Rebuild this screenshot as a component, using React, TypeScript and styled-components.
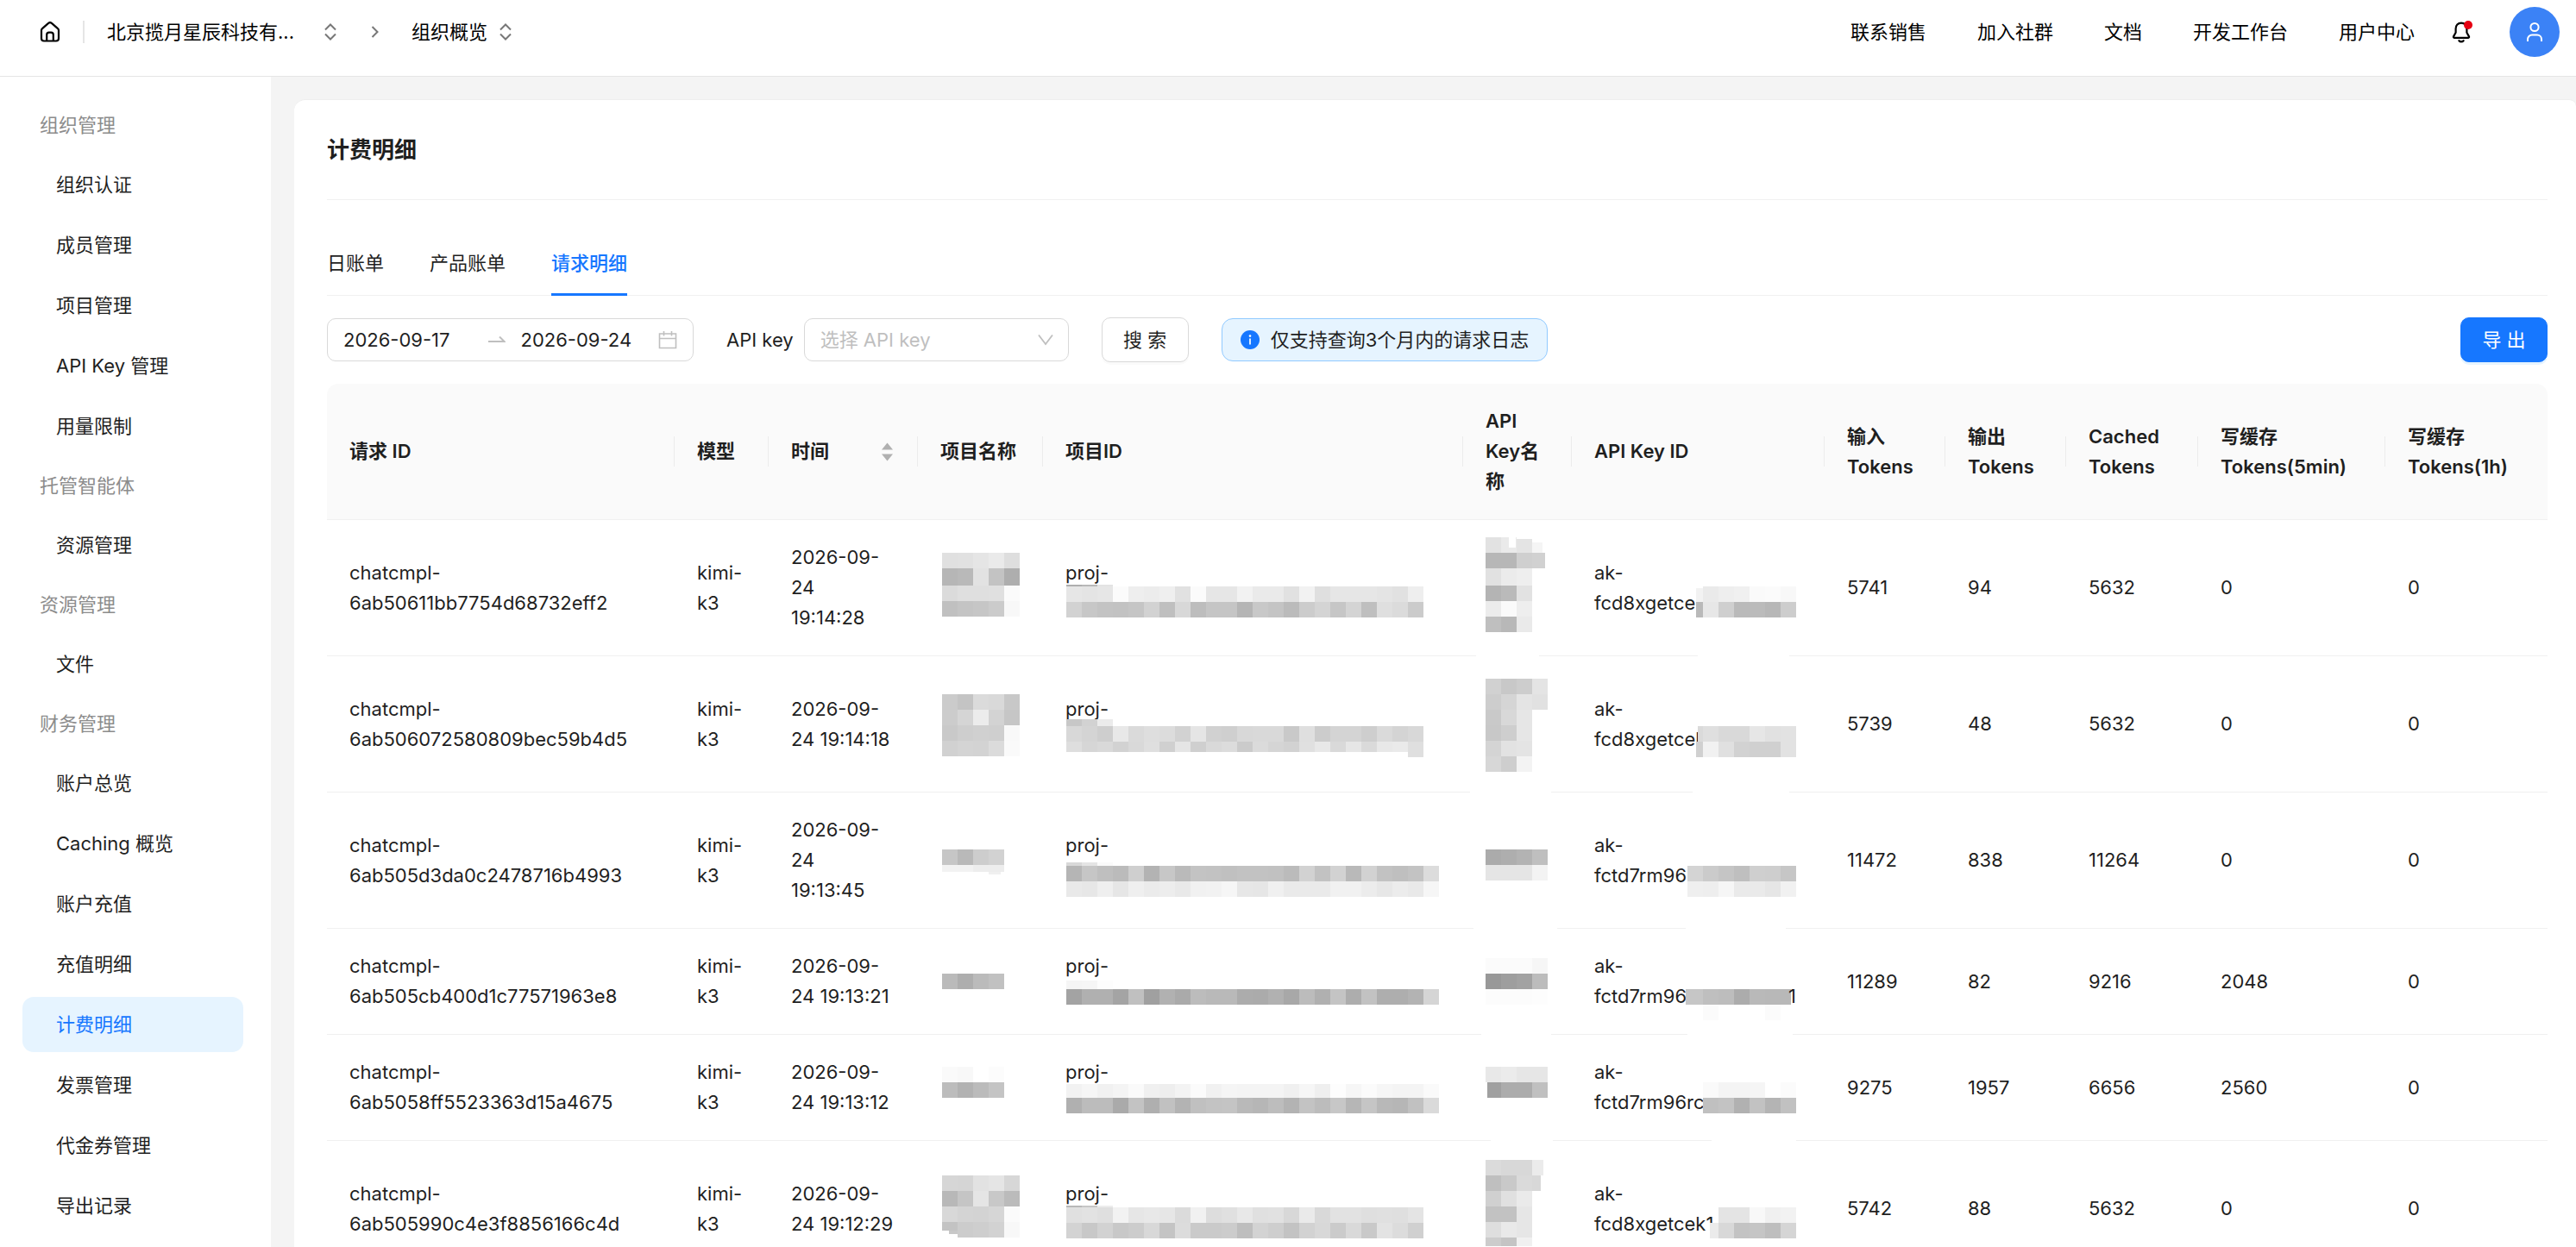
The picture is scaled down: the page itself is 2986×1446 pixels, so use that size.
import React from "react";
import styled, { createGlobalStyle, css } from "styled-components";

const GlobalStyle = createGlobalStyle`
  * { box-sizing: border-box; }
  body {
    margin: 0;
    color: #1f1f1f;
    background: #f4f4f4;
    font-family: Inter, "Noto Sans CJK SC", sans-serif;
    font-size: 22px;
    line-height: 35px;
  }
  button, input, select { font: inherit; color: inherit; }
`;

/* ---------- shell ---------- */

const Shell = styled.div`
  display: flex;
  flex-direction: column;
  height: 100vh;
  overflow: hidden;
`;

const Header = styled.header`
  display: flex;
  align-items: center;
  justify-content: space-between;
  flex: none;
  height: 89px;
  padding: 0 19px 14px 46px;
  background: #fff;
  border-bottom: 1px solid #e5e5e5;
  color: #000;
`;

const Crumbs = styled.nav`
  display: flex;
  align-items: center;
`;

const PlainButton = styled.button`
  display: inline-flex;
  align-items: center;
  padding: 0;
  border: 0;
  background: none;
  cursor: pointer;
`;

const CrumbDivider = styled.span`
  width: 2px;
  height: 26px;
  margin: 0 26px;
  background: #e5e5e5;
`;

const OrgButton = styled(PlainButton)`
  gap: 35px;
`;

const PageButton = styled(PlainButton)`
  gap: 14px;
`;

const CrumbArrow = styled.svg`
  margin: 0 38px 0 40px;
`;

const TopNav = styled.nav`
  display: flex;
  align-items: center;
  gap: 59px;
`;

const TopLink = styled.a`
  color: #000;
  text-decoration: none;
`;

const TopActions = styled.div`
  display: flex;
  align-items: center;
  gap: 43px;
`;

const BellButton = styled(PlainButton)`
  position: relative;
`;

const BellDot = styled.span`
  position: absolute;
  top: 0;
  right: 0;
  width: 10px;
  height: 10px;
  border-radius: 50%;
  background: #e60012;
`;

const Avatar = styled(PlainButton)`
  justify-content: center;
  width: 58px;
  height: 58px;
  border-radius: 50%;
  background: #3b82f6;
`;

const Body = styled.div`
  display: flex;
  flex: 1;
  min-height: 0;
`;

const Sidebar = styled.nav`
  display: flex;
  flex-direction: column;
  gap: 6px;
  flex: none;
  width: 314px;
  padding: 25px 32px 0 26px;
  background: #fff;
`;

const GroupLabel = styled.div`
  flex: none;
  padding: 14px 20px 13px;
  color: #8c8c8c;
`;

const MenuLink = styled.a<{ $active?: boolean }>`
  display: flex;
  align-items: center;
  flex: none;
  height: 64px;
  padding: 0 39px;
  border-radius: 13px;
  color: ${(p) => (p.$active ? "#1677ff" : "#1f1f1f")};
  background: ${(p) => (p.$active ? "#e6f4ff" : "transparent")};
  text-decoration: none;
  white-space: nowrap;
`;

const Main = styled.main`
  flex: 1;
  min-width: 0;
  padding: 26px 0 0 27px;
`;

const Card = styled.section`
  min-height: 100%;
  padding: 0 33px 0 38px;
  background: #fff;
  border-top: 1px solid #eee;
  border-radius: 13px 8px 0 0;
`;

const Title = styled.h1`
  margin: 0;
  padding: 38px 0 37px;
  border-bottom: 1px solid #f0f0f0;
  font-size: 26px;
  line-height: 40px;
  font-weight: 600;
`;

/* ---------- tabs and filters ---------- */

const Tabs = styled.div`
  display: flex;
  gap: 53px;
  margin-top: 37px;
  border-bottom: 1px solid #f0f0f0;
`;

const Tab = styled.button<{ $active?: boolean }>`
  margin: 0 0 -1px;
  padding: 19px 0 20px;
  border: 0;
  background: none;
  cursor: pointer;
  ${(p) =>
    p.$active &&
    css`
      color: #1677ff;
      font-weight: 500;
      box-shadow: inset 0 -3px #1677ff;
    `}
`;

const Filters = styled.form`
  display: flex;
  align-items: center;
  gap: 38px;
  height: 52px;
  margin: 25px 0;
`;

const DateRange = styled.div`
  display: flex;
  align-items: center;
  width: 425px;
  height: 50px;
  padding: 0 18px;
  border: 1px solid #d9d9d9;
  border-radius: 10px;
`;

const DateInput = styled.input`
  flex: 1;
  min-width: 0;
  padding: 0;
  border: 0;
  outline: 0;
  background: none;
`;

const DateArrow = styled.svg`
  flex: none;
  margin: 0 18px 0 8px;
`;

const Field = styled.div`
  display: flex;
  align-items: center;
  gap: 12px;
`;

const SelectBox = styled.div`
  position: relative;
  display: flex;
`;

const KeySelect = styled.select`
  width: 307px;
  height: 50px;
  padding: 0 48px 0 18px;
  border: 1px solid #d9d9d9;
  border-radius: 10px;
  outline: 0;
  appearance: none;
  background: #fff;
  color: #bfbfbf;
`;

const SelectArrow = styled.svg`
  position: absolute;
  right: 18px;
  top: 18px;
  pointer-events: none;
`;

const Button = styled.button<{ $primary?: boolean }>`
  width: 101px;
  height: 52px;
  padding: 0;
  border: 1px solid ${(p) => (p.$primary ? "#1677ff" : "#d9d9d9")};
  border-radius: 10px;
  background: ${(p) => (p.$primary ? "#1677ff" : "#fff")};
  color: ${(p) => (p.$primary ? "#fff" : "#1f1f1f")};
  box-shadow: 0 3px 0 ${(p) => (p.$primary ? "rgba(5, 145, 255, 0.1)" : "rgba(0, 0, 0, 0.02)")};
  cursor: pointer;
`;

const Notice = styled.div`
  display: flex;
  align-items: center;
  gap: 13px;
  height: 50px;
  padding: 0 21px;
  border: 1px solid #91caff;
  border-radius: 13px;
  background: #e6f4ff;
`;

const Spacer = styled.div`
  flex: 1;
`;

/* ---------- table ---------- */

const Table = styled.table`
  width: 100%;
  table-layout: fixed;
  border-collapse: separate;
  border-spacing: 0;
`;

const Th = styled.th`
  position: relative;
  height: 158px;
  padding: 26px;
  background: #fafafa;
  border-bottom: 1px solid #f0f0f0;
  font-weight: 600;
  text-align: left;
  white-space: nowrap;
  &:first-child { border-top-left-radius: 13px; }
  &:last-child { border-top-right-radius: 13px; }
  &:not(:last-child)::after {
    content: "";
    position: absolute;
    right: 0;
    top: 61px;
    width: 1px;
    height: 35px;
    background: #ececec;
  }
`;

const Sortable = styled.div`
  display: flex;
  align-items: center;
  justify-content: space-between;
`;

const Td = styled.td`
  padding: 26px;
  border-bottom: 1px solid #f0f0f0;
  vertical-align: middle;
  white-space: nowrap;
`;

const Masked = styled.div<{ $lines: number }>`
  position: relative;
  min-height: ${(p) => p.$lines * 35}px;
`;

const MaskLayer = styled.svg`
  position: absolute;
  inset: 0;
  width: 100%;
  height: 100%;
  overflow: visible;
`;

const KeyTail = styled.span`
  position: absolute;
  right: 7px;
  bottom: 0;
`;

/** A run of mosaic tiles: x, y, height, grey levels, tile width. */
type Strip = [number, number, number, string, number?];

const Mosaic = ({ strips }: { strips: Strip[] }) => (
  <MaskLayer aria-hidden="true" shapeRendering="crispEdges">
    {strips.map(([x, y, h, shades, w = 18], s) =>
      shades.split(" ").map((g, i) => (
        <rect key={`${s}-${i}`} x={x + i * w} y={y} width={w} height={h} fill={`#${g}${g}${g}`} />
      ))
    )}
  </MaskLayer>
);

const Lines = ({ lines }: { lines: string[] }) => (
  <>
    {lines.map((line, i) => (
      <React.Fragment key={i}>
        {i > 0 && <br />}
        {line}
      </React.Fragment>
    ))}
  </>
);

type Row = {
  id: string;
  time: string[];
  lines: number;
  project: Strip[];
  projectId: Strip[];
  keyName: Strip[];
  key: string;
  keyTail?: string;
  keyMask: Strip[];
  tokens: number[];
};

const rows: Row[] = [
  {
    id: "6ab50611bb7754d68732eff2",
    time: ["2026-09-", "24", "19:14:28"],
    lines: 3,
    project: [
      [2, 12, 18, "e0 e1 e5 ea de"],
      [2, 30, 20, "b6 b9 e2 c3 ae"],
      [2, 50, 18, "db df df e0 fb"],
      [2, 68, 18, "c0 c4 c6 cb f8"],
    ],
    projectId: [
      [1, 31, 2, "ae b8 e3"],
      [1, 33, 18, "e6 e4 e6 fb ee ec ef e1 fb e6 e6 f2 ea ea e1 f2 df e6 e6 e6 e4 e1 ee"],
      [1, 51, 18, "d2 c7 c3 c2 c5 d2 bf d8 bd c5 c5 b5 c8 c4 bb cc d4 c6 d4 bf df db cb"],
    ],
    keyName: [
      [0, -6, 18, "e2 ea"],
      [27, -6, 12, "ff", 8],
      [36, -4, 16, "e4"],
      [54, 0, 12, "f5", 12],
      [0, 12, 18, "b7 b7 cf"],
      [54, 12, 18, "d1", 15],
      [0, 30, 20, "e1 eb ee"],
      [0, 50, 18, "b4 ba e2"],
      [0, 68, 18, "ec fa ee"],
      [0, 86, 18, "bf b8 ea"],
      [-11, 130, 3, "ff", 73],
    ],
    key: "fcd8xgetce",
    keyMask: [
      [118, 35, 16, "f2", 8],
      [126, 33, 18, "ea ee f0 fa fb f8"],
      [118, 51, 18, "b9", 8],
      [126, 51, 18, "e7 cf ba bb b7 cd"],
      [120, 112, 4, "ff", 106],
    ],
    tokens: [5741, 94, 5632, 0, 0],
  },
  {
    id: "6ab506072580809bec59b4d5",
    time: ["2026-09-", "24 19:14:18"],
    lines: 3,
    project: [
      [2, 18, 18, "cb c4 db d9 c8"],
      [2, 36, 18, "cc d5 ec d3 c6"],
      [2, 54, 18, "c9 ce d0 cf f9"],
      [2, 72, 18, "d1 d4 d3 db fa"],
    ],
    projectId: [
      [1, 29, 8, "c7 d2 eb"],
      [1, 37, 18, "d8 d4 ce e8 da de dc d2 e5 d1 cf d8 d9 d9 c9 df cc d4 d4 ce da d4 d8"],
      [1, 55, 12, "de d6 d9 d2 d9 df d0 e5 cf d9 dc cb db d5 d2 e0 e8 d9 e6 da e8 ea"],
      [397, 55, 18, "df"],
    ],
    keyName: [
      [0, 0, 18, "d1 c8 cd e4"],
      [0, 18, 18, "cd d5 e4 e1"],
      [0, 36, 18, "c9 d8 e6"],
      [0, 54, 18, "c8 ce e6"],
      [0, 72, 18, "d4 e2 e4"],
      [0, 90, 18, "d7 ce f3"],
      [-18, 130, 3, "ff", 94],
    ],
    key: "fcd8xgetcel",
    keyMask: [
      [120, 37, 18, "da", 6],
      [126, 37, 18, "df d9 d9 e6 e1 e2"],
      [118, 55, 18, "d0", 8],
      [126, 55, 18, "f1 e0 d2 d0 d0 e2"],
      [114, 112, 4, "ff", 112],
    ],
    tokens: [5739, 48, 5632, 0, 0],
  },
  {
    id: "6ab505d3da0c2478716b4993",
    time: ["2026-09-", "24", "19:13:45"],
    lines: 3,
    project: [
      [2, 40, 18, "c6 b9 cd d2"],
      [2, 58, 8, "f2 f2 ed ed"],
      [56, 66, 3, "f0", 14],
    ],
    projectId: [
      [1, 37, 4, "d8 e4 fa"],
      [1, 41, 18, "b5 c6 bf bb cf b3 c7 ba c3 c2 c0 c2 c2 c1 bb d2 c2 d2 b9 d2 c2 bf c3 dc"],
      [1, 59, 18, "e9 e7 ef e6 ef eb ed e9 f1 f2 f6 e7 e6 f0 ea ea ea f1 f1 ec e7 ec e9 f6"],
    ],
    keyName: [
      [0, 40, 18, "ab ae b3 bf"],
      [0, 58, 18, "e5 e5 e5 f3"],
      [-14, 130, 3, "ff", 97],
    ],
    key: "fctd7rm96",
    keyMask: [
      [108, 41, 18, "d4 cb c5 bf cf ce c6"],
      [108, 59, 18, "ef ee f6 ea ea e6 f1"],
      [106, 112, 4, "ff", 116],
    ],
    tokens: [11472, 838, 11264, 0, 0],
  },
  {
    id: "6ab505cb400d1c77571963e8",
    time: ["2026-09-", "24 19:13:21"],
    lines: 2,
    project: [[2, 26, 18, "ba ae bb c1"]],
    projectId: [
      [1, 34, 10, "f5 f6 fd"],
      [1, 44, 18, "a3 b0 b0 a4 c0 a0 b1 aa bc b9 b9 ac ab b1 a8 bc b0 c4 ad c2 ae ae b3 d5"],
    ],
    keyName: [
      [0, 8, 18, "fb fb fb f6"],
      [0, 26, 18, "98 9e a2 bc"],
      [0, 44, 18, "fc fc fc fd"],
      [-5, 95, 3, "ff", 81],
    ],
    key: "fctd7rm96",
    keyTail: "1",
    keyMask: [
      [106, 44, 18, "c6", 20],
      [126, 44, 18, "bf bd ac b9 b8"],
      [216, 44, 18, "b8", 12],
      [126, 62, 18, "fb ff ff ff fb"],
      [108, 95, 3, "ff", 122],
    ],
    tokens: [11289, 82, 9216, 2048, 0],
  },
  {
    id: "6ab5058ff5523363d15a4675",
    time: ["2026-09-", "24 19:13:12"],
    lines: 2,
    project: [
      [2, 11, 18, "fa f8 ff fc"],
      [2, 29, 18, "bc b2 bb c4"],
    ],
    projectId: [
      [1, 31, 16, "f2 f6 f1 f4 fa f0 ee f3 fb f1 f5 f4 f4 f4 f0 f6 ef fd f6 fb f6 f4 f4 fa"],
      [1, 47, 18, "b0 bc bc aa c3 af c1 b3 c0 c3 c4 b9 b6 bd b3 c3 bc c7 b6 c5 b8 b6 c1 da"],
    ],
    keyName: [
      [0, 11, 18, "e8 eb e6 e6"],
      [2, 29, 18, "a0", 16],
      [18, 29, 18, "ac ac c0"],
      [6, 95, 3, "ff", 72],
    ],
    key: "fctd7rm96rc",
    keyMask: [
      [126, 29, 18, "fa f4 f4 f5 ff fb"],
      [126, 47, 18, "c0 c3 b1 c2 b4 c1"],
      [136, 95, 3, "ff", 98],
    ],
    tokens: [9275, 1957, 6656, 2560, 0],
  },
  {
    id: "6ab505990c4e3f8856166c4d",
    time: ["2026-09-", "24 19:12:29"],
    lines: 3,
    project: [
      [2, 14, 18, "d6 d5 e2 e5 d7"],
      [2, 32, 18, "b8 c5 e5 c8 bb"],
      [2, 50, 18, "d8 d4 d3 d6 fb"],
      [2, 68, 10, "c3"],
      [10, 78, 4, "c8", 10],
      [20, 68, 18, "cc ce d2 f8"],
    ],
    projectId: [
      [1, 31, 2, "b8 c6 ec"],
      [1, 33, 18, "e0 e2 df f2 e6 e8 e6 db f1 dd e0 e8 e0 e1 d8 ea d9 e2 e2 df e0 df e4"],
      [1, 51, 18, "d3 c8 d2 c8 cc d8 c4 dc ca ca cc be d3 ce c3 d2 d8 cb d9 c9 e3 dc d0"],
    ],
    keyName: [
      [0, -4, 18, "db d8 d8"],
      [54, -4, 18, "eb", 13],
      [0, 14, 18, "bf c9 da"],
      [54, 14, 18, "d8", 10],
      [0, 32, 18, "d0 e0 ea"],
      [0, 50, 18, "c2 c2 e6"],
      [0, 68, 18, "de e9 e6"],
      [0, 86, 10, "cc c4 f0"],
    ],
    key: "fcd8xgetcek1",
    keyMask: [
      [144, 33, 18, "e4 e4 f8 f0 f2"],
      [134, 51, 18, "eb", 10],
      [144, 51, 18, "d8 c3 c5 be d5"],
    ],
    tokens: [5742, 88, 5632, 0, 0],
  },
];

const columnWidths = [403, 109, 173, 145, 487, 126, 293, 140, 140, 153, 217, 188];

const menu = [
  { label: "组织管理", items: ["组织认证", "成员管理", "项目管理", "API Key 管理", "用量限制"] },
  { label: "托管智能体", items: ["资源管理"] },
  { label: "资源管理", items: ["文件"] },
  {
    label: "财务管理",
    items: ["账户总览", "Caching 概览", "账户充值", "充值明细", "计费明细", "发票管理", "代金券管理", "导出记录"],
  },
];

/* ---------- icons ---------- */

const UpDown = () => (
  <svg width="14" height="20" viewBox="0 0 14 20" fill="none" stroke="#777" strokeWidth="2">
    <path d="M1 7.5 7 1.5l6 6M1 12.5l6 6 6-6" />
  </svg>
);

const HomeIcon = () => (
  <svg width="24" height="24" viewBox="0 0 24 24" fill="none" stroke="#000" strokeWidth="2.2">
    <path d="M2 10.3c0-.9.4-1.7 1-2.2l7.1-6.2a2.8 2.8 0 0 1 3.8 0L21 8.1c.6.5 1 1.3 1 2.2v9.2a3 3 0 0 1-3 3H5a3 3 0 0 1-3-3z" />
    <path d="M8.2 22.5v-7.3a2.6 2.6 0 0 1 2.6-2.6h2.4a2.6 2.6 0 0 1 2.6 2.6v7.3" />
  </svg>
);

const BellIcon = () => (
  <svg width="24" height="26" viewBox="0 0 24 26" fill="none" stroke="#000" strokeWidth="2.2" strokeLinejoin="round">
    <path d="M11 2.6c-4 0-6.4 2.8-6.4 6.6v4.6L2 18.4c-.3.7 0 1.4.8 1.4h16.4c.8 0 1.1-.7.8-1.4l-2.6-4.6V9.2c0-3.8-2.4-6.6-6.4-6.6z" />
    <path d="M8.4 23.2c1.4 1.6 3.8 1.6 5.2 0" strokeLinecap="round" />
  </svg>
);

const UserIcon = () => (
  <svg width="20" height="24" viewBox="0 0 20 24" fill="none" stroke="#fff" strokeWidth="2">
    <circle cx="10" cy="6.5" r="4.6" />
    <path d="M2 23v-2.5a5 5 0 0 1 5-5h6a5 5 0 0 1 5 5V23" />
  </svg>
);

const CalendarIcon = () => (
  <svg width="22" height="22" viewBox="0 0 22 22" fill="none" stroke="#bfbfbf" strokeWidth="1.6">
    <path d="M1.5 4h19v16.5h-19zM1.5 9.5h19M6.5 1v5.5M15.5 1v5.5" />
  </svg>
);

const InfoIcon = () => (
  <svg width="22" height="22" viewBox="0 0 22 22">
    <circle cx="11" cy="11" r="11" fill="#1677ff" />
    <circle cx="11" cy="6.6" r="1.3" fill="#fff" />
    <path d="M11 9.6v6.8" stroke="#fff" strokeWidth="1.7" />
  </svg>
);

const SortIcon = () => (
  <svg width="19" height="22" viewBox="0 0 19 22" fill="#b0b0b0">
    <path d="M3 8.5 9.5.5l6.5 8zM3 13.5h13l-6.5 8z" />
  </svg>
);

/* ---------- page ---------- */

export default function App() {
  return (
    <Shell>
      <GlobalStyle />
      <Header>
        <Crumbs aria-label="路径">
          <PlainButton aria-label="首页">
            <HomeIcon />
          </PlainButton>
          <CrumbDivider />
          <OrgButton>
            北京揽月星辰科技有...
            <UpDown />
          </OrgButton>
          <CrumbArrow width="9" height="14" viewBox="0 0 9 14" fill="none" stroke="#777" strokeWidth="2">
            <path d="m1.5 1 6 6-6 6" />
          </CrumbArrow>
          <PageButton>
            组织概览
            <UpDown />
          </PageButton>
        </Crumbs>
        <TopActions>
          <TopNav>
            {["联系销售", "加入社群", "文档", "开发工作台", "用户中心"].map((t) => (
              <TopLink key={t} href="#">
                {t}
              </TopLink>
            ))}
          </TopNav>
          <BellButton aria-label="通知">
            <BellIcon />
            <BellDot />
          </BellButton>
          <Avatar aria-label="账户">
            <UserIcon />
          </Avatar>
        </TopActions>
      </Header>
      <Body>
        <Sidebar>
          {menu.map((group) => (
            <React.Fragment key={group.label}>
              <GroupLabel>{group.label}</GroupLabel>
              {group.items.map((item) => (
                <MenuLink key={item} href="#" $active={item === "计费明细"}>
                  {item}
                </MenuLink>
              ))}
            </React.Fragment>
          ))}
        </Sidebar>
        <Main>
          <Card>
            <Title>计费明细</Title>
            <Tabs role="tablist">
              <Tab role="tab">日账单</Tab>
              <Tab role="tab">产品账单</Tab>
              <Tab role="tab" aria-selected="true" $active>
                请求明细
              </Tab>
            </Tabs>
            <Filters onSubmit={(e) => e.preventDefault()}>
              <DateRange>
                <DateInput aria-label="开始日期" defaultValue="2026-09-17" />
                <DateArrow width="20" height="12" viewBox="0 0 20 12" fill="none" stroke="#bfbfbf" strokeWidth="2">
                  <path d="M0 8h18.5L13 2.5" />
                </DateArrow>
                <DateInput aria-label="结束日期" defaultValue="2026-09-24" />
                <CalendarIcon />
              </DateRange>
              <Field>
                <label htmlFor="api-key">API key</label>
                <SelectBox>
                  <KeySelect id="api-key" defaultValue="">
                    <option value="">选择 API key</option>
                  </KeySelect>
                  <SelectArrow width="18" height="14" viewBox="0 0 18 14" fill="none" stroke="#bfbfbf" strokeWidth="1.8">
                    <path d="m1 1.5 8 10.5 8-10.5" />
                  </SelectArrow>
                </SelectBox>
              </Field>
              <Button type="submit">搜 索</Button>
              <Notice role="note">
                <InfoIcon />
                仅支持查询3个月内的请求日志
              </Notice>
              <Spacer />
              <Button type="button" $primary>
                导 出
              </Button>
            </Filters>
            <Table>
              <colgroup>
                {columnWidths.map((w, i) => (
                  <col key={i} width={w} />
                ))}
              </colgroup>
              <thead>
                <tr>
                  <Th>请求 ID</Th>
                  <Th>模型</Th>
                  <Th>
                    <Sortable>
                      时间
                      <SortIcon />
                    </Sortable>
                  </Th>
                  <Th>项目名称</Th>
                  <Th>项目ID</Th>
                  <Th>
                    <Lines lines={["API", "Key名", "称"]} />
                  </Th>
                  <Th>API Key ID</Th>
                  <Th>
                    <Lines lines={["输入", "Tokens"]} />
                  </Th>
                  <Th>
                    <Lines lines={["输出", "Tokens"]} />
                  </Th>
                  <Th>
                    <Lines lines={["Cached", "Tokens"]} />
                  </Th>
                  <Th>
                    <Lines lines={["写缓存", "Tokens(5min)"]} />
                  </Th>
                  <Th>
                    <Lines lines={["写缓存", "Tokens(1h)"]} />
                  </Th>
                </tr>
              </thead>
              <tbody>
                {rows.map((row) => (
                  <tr key={row.id}>
                    <Td>
                      <Lines lines={["chatcmpl-", row.id]} />
                    </Td>
                    <Td>
                      <Lines lines={["kimi-", "k3"]} />
                    </Td>
                    <Td>
                      <Lines lines={row.time} />
                    </Td>
                    <Td>
                      <Masked $lines={row.lines}>
                        <Mosaic strips={row.project} />
                      </Masked>
                    </Td>
                    <Td>
                      <Masked $lines={2}>
                        proj-
                        <Mosaic strips={row.projectId} />
                      </Masked>
                    </Td>
                    <Td>
                      <Masked $lines={row.lines}>
                        <Mosaic strips={row.keyName} />
                      </Masked>
                    </Td>
                    <Td>
                      <Masked $lines={2}>
                        <Lines lines={["ak-", row.key]} />
                        <Mosaic strips={row.keyMask} />
                        {row.keyTail && <KeyTail>{row.keyTail}</KeyTail>}
                      </Masked>
                    </Td>
                    {row.tokens.map((n, i) => (
                      <Td key={i}>{n}</Td>
                    ))}
                  </tr>
                ))}
              </tbody>
            </Table>
          </Card>
        </Main>
      </Body>
    </Shell>
  );
}
